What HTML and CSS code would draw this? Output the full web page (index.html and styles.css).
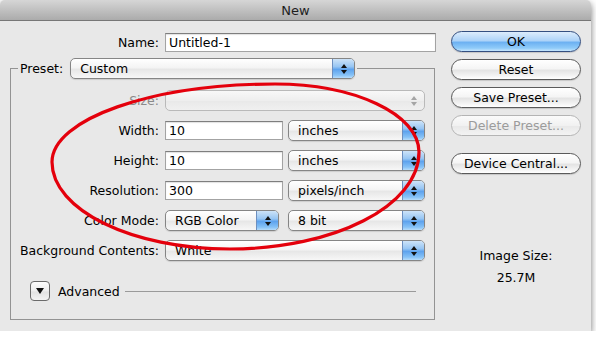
FILE: index.html
```html
<!DOCTYPE html>
<html lang="en">
<head>
    <meta charset="UTF-8">
    <title>New</title>
    <link rel="stylesheet" href="styles.css">
</head>
<body>
<div class="window">
    <div class="titlebar">New</div>
    <div class="content">
        <div class="main">
            <div class="name-row">
                <label class="label" for="name">Name:</label>
                <input class="field field-name" id="name" type="text" value="Untitled-1">
            </div>

            <fieldset class="group">
                <legend class="group-head">
                    <span class="legend-label">Preset:</span>
                    <div class="popup popup-preset"><span class="popup-text">Custom</span><span class="popup-arrows"></span></div>
                </legend>

                <div class="rows">
                    <label class="label disabled">Size:</label>
                    <div class="popup popup-off"><span class="popup-text"></span><span class="popup-arrows"></span></div>

                    <label class="label">Width:</label>
                    <div class="pair">
                        <input class="field field-num" type="text" value="10">
                        <div class="popup popup-unit"><span class="popup-text">inches</span><span class="popup-arrows"></span></div>
                    </div>

                    <label class="label">Height:</label>
                    <div class="pair">
                        <input class="field field-num" type="text" value="10">
                        <div class="popup popup-unit"><span class="popup-text">inches</span><span class="popup-arrows"></span></div>
                    </div>

                    <label class="label">Resolution:</label>
                    <div class="pair">
                        <input class="field field-num" type="text" value="300">
                        <div class="popup popup-unit"><span class="popup-text">pixels/inch</span><span class="popup-arrows"></span></div>
                    </div>

                    <label class="label">Color Mode:</label>
                    <div class="pair">
                        <div class="popup popup-mode"><span class="popup-text">RGB Color</span><span class="popup-arrows"></span></div>
                        <div class="popup popup-unit"><span class="popup-text">8 bit</span><span class="popup-arrows"></span></div>
                    </div>

                    <label class="label">Background Contents:</label>
                    <div class="popup"><span class="popup-text">White</span><span class="popup-arrows"></span></div>
                </div>

                <div class="advanced">
                    <span class="disclosure"></span>
                    <span class="advanced-text">Advanced</span>
                    <span class="advanced-line"></span>
                </div>
            </fieldset>
        </div>

        <div class="side">
            <div class="buttons">
                <button class="btn btn-default">OK</button>
                <button class="btn">Reset</button>
                <button class="btn">Save Preset...</button>
                <button class="btn" disabled>Delete Preset...</button>
            </div>
            <button class="btn btn-device">Device Central...</button>
            <div class="size-label"><span>Image Size:</span></div>
            <div class="size-value"><span>25.7M</span></div>
        </div>
    </div>
</div>

<svg class="markup" width="596" height="340" viewBox="0 0 596 340">
    <path d="M52 162 C52 119 152 84 275 84 C354 84 419 114 419 152 C419 206 334 249 230 249 C132 249 52 210 52 162 Z"
          fill="none" stroke="#e4000c" stroke-width="3.2"/>
</svg>
</body>
</html>
```

FILE: styles.css
```css
body {
    margin: 0;
    background-color: #fff;
    font-family: "DejaVu Sans", sans-serif;
    font-size: 12.5px;
    color: #000;
}

.window {
    width: 591px;
    height: 331px;
    background-color: #e8e8e8;
    border-radius: 5px 5px 0 0;
    box-shadow: 0 3px 7px rgba(0, 0, 0, 0.55);
    overflow: hidden;
}

.titlebar {
    height: 20px;
    line-height: 21px;
    text-align: center;
    font-size: 13px;
    color: #1e1e1e;
    background: linear-gradient(#d6d6d6, #ababab);
    border-bottom: 1px solid #777;
}

.content {
    display: flex;
}

.main {
    width: 440px;
}

.name-row {
    display: flex;
    align-items: center;
    margin-top: 11px;
}

.label {
    text-align: right;
    white-space: nowrap;
    line-height: 21px;
}
.name-row .label {
    width: 159px;
    margin-right: 6px;
}
.label.disabled {
    color: #8a8a8a;
}

.field {
    height: 19px;
    box-sizing: border-box;
    margin: 0;
    padding: 0 3px;
    border: 1px solid #a3a3a3;
    border-top-color: #7e7e7e;
    background-color: #fff;
    box-shadow: inset 0 1px 1px rgba(0, 0, 0, 0.12);
    font-family: inherit;
    font-size: 12.5px;
    color: #000;
    outline: none;
}
.field-name {
    width: 271px;
}
.field-num {
    width: 118px;
}

.group {
    margin: 5px 0 0 10px;
    padding: 0;
    width: 425px;
    box-sizing: border-box;
    border: 1px solid #939393;
    min-width: 0;
}

.group-head {
    display: flex;
    align-items: center;
    gap: 7px;
    margin-left: 7px;
    padding: 0 2px;
    background-color: #e8e8e8;
}

.rows {
    display: grid;
    grid-template-columns: 148px 260px;
    grid-auto-rows: 21px;
    column-gap: 6px;
    row-gap: 9px;
    padding-top: 11px;
    align-items: center;
}

.pair {
    display: flex;
    align-items: center;
    justify-content: space-between;
}

/* popup menus */
.popup {
    display: flex;
    height: 21px;
    box-sizing: border-box;
    border: 1px solid #858585;
    border-radius: 5px;
    background: linear-gradient(#ffffff, #f4f4f4 45%, #e7e7e7 55%, #f7f7f7);
    box-shadow: 0 1px 1px rgba(0, 0, 0, 0.12);
    overflow: hidden;
}
.popup-text {
    flex: 1;
    padding-left: 9px;
    line-height: 19px;
    white-space: nowrap;
}
.popup-arrows {
    width: 21px;
    display: flex;
    flex-direction: column;
    align-items: center;
    justify-content: center;
    gap: 2px;
    border-left: 1px solid #6d8fbf;
    background: linear-gradient(#cde3f8, #98c6f3 40%, #5ea3ee 55%, #86c2f7 85%, #b7dcfb);
}
.popup-arrows::before,
.popup-arrows::after {
    content: "";
    width: 0;
    height: 0;
    border-left: 3px solid transparent;
    border-right: 3px solid transparent;
}
.popup-arrows::before {
    border-bottom: 4px solid #111;
}
.popup-arrows::after {
    border-top: 4px solid #111;
}

.popup-preset {
    width: 285px;
}
.popup-unit {
    width: 137px;
}
.popup-mode {
    width: 114px;
}

.popup-off {
    border-color: #b9b9b9;
    background: linear-gradient(#f8f8f8, #eeeeee 50%, #e9e9e9 55%, #f0f0f0);
    box-shadow: none;
}
.popup-off .popup-arrows {
    border-left: none;
    background: none;
}
.popup-off .popup-arrows::before {
    border-bottom-color: #a5a5a5;
}
.popup-off .popup-arrows::after {
    border-top-color: #a5a5a5;
}

/* advanced */
.advanced {
    display: flex;
    align-items: center;
    height: 20px;
    margin: 20px 18px 18px 19px;
}
.disclosure {
    width: 20px;
    height: 20px;
    box-sizing: border-box;
    border: 1px solid #6a6a6a;
    border-radius: 4px;
    background: linear-gradient(#fdfdfd, #eeeeee 50%, #e2e2e2 55%, #f3f3f3);
    display: flex;
    align-items: center;
    justify-content: center;
}
.disclosure::after {
    content: "";
    border-left: 4px solid transparent;
    border-right: 4px solid transparent;
    border-top: 6px solid #111;
}
.advanced-text {
    margin-left: 8px;
}
.advanced-line {
    flex: 1;
    height: 1px;
    margin-left: 5px;
    background-color: #9a9a9a;
}

/* right column */
.side {
    width: 130px;
    margin-left: 11px;
    padding-top: 10px;
    text-align: center;
}
.buttons {
    display: flex;
    flex-direction: column;
    gap: 7px;
}

.btn {
    display: block;
    width: 130px;
    height: 21px;
    box-sizing: border-box;
    padding: 0;
    border: 1px solid #5a5a5a;
    border-radius: 11px;
    background: linear-gradient(#ffffff, #f5f5f5 45%, #e4e4e4 55%, #f5f5f5 85%, #ffffff);
    box-shadow: 0 1px 1px rgba(0, 0, 0, 0.15);
    font-family: inherit;
    font-size: 12.5px;
    color: #000;
}
.btn-default {
    border-color: #344f80;
    background: linear-gradient(#dcecfc, #add3f8 45%, #6db1f2 55%, #8fcbf9 85%, #c8e6fd);
}
.btn:disabled {
    border-color: #b4b4b4;
    color: #9b9b9b;
    box-shadow: none;
    background: linear-gradient(#fbfbfb, #f1f1f1 50%, #e9e9e9 55%, #f3f3f3);
}
.btn-device {
    margin-top: 17px;
}

.size-label {
    margin-top: 74px;
    line-height: 15px;
}
.size-value {
    margin-top: 7px;
    line-height: 15px;
}

.markup {
    position: absolute;
    top: 0;
    left: 0;
    pointer-events: none;
}
```
